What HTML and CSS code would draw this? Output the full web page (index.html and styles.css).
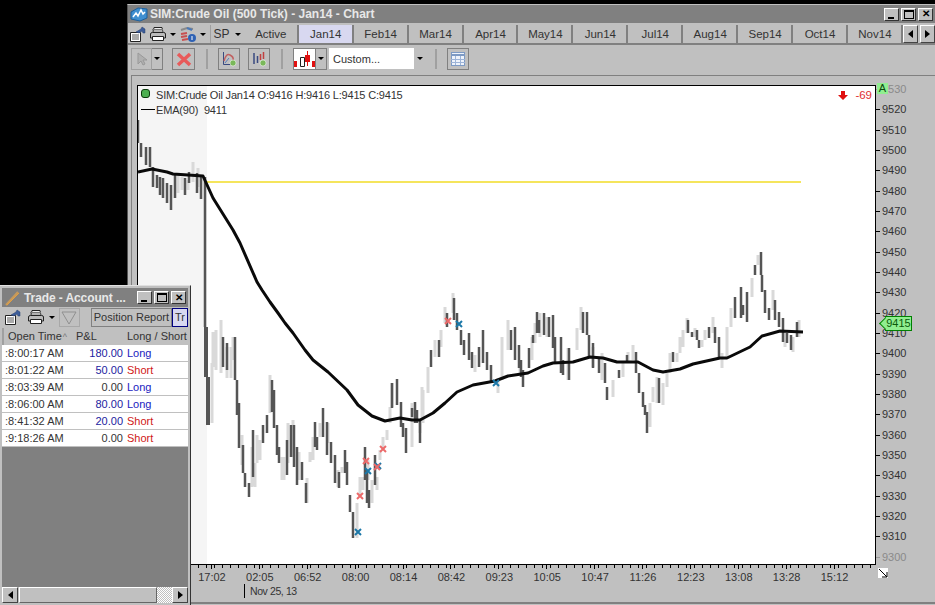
FILE: index.html
```html
<!DOCTYPE html>
<html lang="en">

<head>
    <meta charset="UTF-8">
    <title>SIM:Crude Oil (500 Tick) - Jan14 - Chart</title>
    <link rel="stylesheet" href="styles.css">
</head>

<body>
    <div class="desktop">
        <!-- chart window -->
        <div class="window chart-window">
            <div class="titlebar">
                <svg class="title-icon" width="18" height="16" viewBox="0 0 18 16">
                    <path d="M1 6l7-4 9 1v9l-7 3-9-2z" fill="#3f8fd0" stroke="#1d5f9c" />
                    <path d="M3 11l3-4 2 3 3-6 2 4 2-2" fill="none" stroke="#fff" stroke-width="1.5" />
                </svg>
                <span class="title-text">SIM:Crude Oil (500 Tick) - Jan14 - Chart</span>
                <div class="win-buttons">
                    <div class="win-btn"><span class="glyph-min"></span></div>
                    <div class="win-btn"><span class="glyph-max"></span></div>
                    <div class="win-btn glyph-close">✕</div>
                </div>
            </div>

            <div class="tabrow">
                <div class="tool-icons">
                    <div class="mini-btn">
                        <svg width="18" height="17" viewBox="0 0 18 17">
                            <path d="M1.500 6.500h10v9h-10z" fill="#fff" stroke="#222" />
                            <path d="M3 9h7M3 11h7M3 13h7" stroke="#555" />
                            <path d="M7 6l5-3 1-2 3 2v4h-2l-1-2-3 2z" fill="#3c5c9a" stroke="#27406e" stroke-width=".5" />
                        </svg>
                    </div>
                    <div class="mini-btn">
                        <svg width="18" height="17" viewBox="0 0 18 17">
                            <path d="M5 1.500l8 0 1 5H4z" fill="#eee" stroke="#222" />
                            <path d="M3 3.500h11M3 5h11" stroke="#777" />
                            <path d="M1.500 8q0-1.500 2-1.500h11q2 0 2 1.500v4h-15z" fill="#bbb" stroke="#222" />
                            <path d="M3.500 10.500h11v4h-11z" fill="#fff" stroke="#222" />
                        </svg>
                    </div>
                    <div class="drop-btn"><i class="arrow"></i></div>
                    <div class="mini-btn">
                        <svg width="18" height="17" viewBox="0 0 18 17">
                            <path d="M2 4l6-2 6 1" fill="none" stroke="#8a8a8a" stroke-width="2" />
                            <path d="M8 2l5 2" stroke="#4a78b8" stroke-width="2" />
                            <path d="M2 8l6-1M2 11l6-1M3 14l6-1" stroke="#c85050" stroke-width="2" />
                            <circle cx="13" cy="12" r="4" fill="#2f62b4" />
                            <path d="M13 10v4" stroke="#fff" />
                        </svg>
                    </div>
                    <div class="drop-btn"><i class="arrow"></i></div>
                    <div class="mini-btn sp-btn">SP</div>
                    <div class="drop-btn"><i class="arrow"></i></div>
                </div>
                <div class="tab">Active</div>
                <div class="tab tab-current">Jan14</div>
                <div class="tab">Feb14</div>
                <div class="tab">Mar14</div>
                <div class="tab">Apr14</div>
                <div class="tab">May14</div>
                <div class="tab">Jun14</div>
                <div class="tab">Jul14</div>
                <div class="tab">Aug14</div>
                <div class="tab">Sep14</div>
                <div class="tab">Oct14</div>
                <div class="tab">Nov14</div>
                <div class="tab-nav">
                    <div class="nav-btn"><i class="arrow-left"></i></div>
                    <div class="nav-btn"><i class="arrow-right"></i></div>
                </div>
            </div>

            <div class="toolbar">
                <div class="tool-btn tool-cursor">
                    <svg width="12" height="14" viewBox="0 0 12 14">
                        <path d="M2 1v11l3-3 2 4 2-1-2-4h4z" fill="#b0b0b0" stroke="#999" />
                    </svg>
                </div>
                <div class="tool-drop"><i class="arrow"></i></div>
                <div class="tool-btn tool-delete">
                    <svg width="16" height="16" viewBox="0 0 16 16">
                        <path d="M2 3l12 11M14 3L2 14" stroke="#e85a5a" stroke-width="3.500" />
                    </svg>
                </div>
                <div class="tool-sep"></div>
                <div class="tool-btn">
                    <svg width="16" height="16" viewBox="0 0 16 16">
                        <path d="M2.500 1v12.500H14" fill="none" stroke="#3a4a80" />
                        <path d="M3 10q2-8 6-6t3 5" fill="none" stroke="#c06060" stroke-width="1.500" />
                        <path d="M4 12l4-5" stroke="#5a7ab8" />
                        <circle cx="12" cy="12" r="3" fill="#7ab85a" stroke="#fff" stroke-width=".5" />
                    </svg>
                </div>
                <div class="tool-btn">
                    <svg width="16" height="16" viewBox="0 0 16 16">
                        <path d="M3 2v11M6.500 5v7" stroke="#3a4a80" stroke-width="1.500" />
                        <path d="M9.500 3v6M12.500 1v7" stroke="#c04040" stroke-width="1.500" />
                        <circle cx="12" cy="12" r="3" fill="#7ab85a" stroke="#fff" stroke-width=".5" />
                    </svg>
                </div>
                <div class="tool-sep"></div>
                <div class="tool-btn tool-candle">
                    <svg width="21" height="20" viewBox="0 0 21 20">
                        <path d="M0 12h3v6H0z" fill="#e01010" />
                        <path d="M6.500 8.500h4v9h-4z" fill="#fff" stroke="#222" />
                        <path d="M13.500 2v15" stroke="#e01010" />
                        <path d="M11 6h5v7h-5z" fill="#e01010" />
                        <path d="M18 12h3v6h-3z" fill="#e01010" />
                    </svg>
                </div>
                <div class="tool-drop tool-drop-candle"><i class="arrow"></i></div>
                <div class="combo">
                    <span class="combo-text">Custom...</span>
                    <div class="combo-btn"><i class="arrow"></i></div>
                </div>
                <div class="tool-sep"></div>
                <div class="tool-btn">
                    <svg width="16" height="16" viewBox="0 0 16 16">
                        <rect x="1.500" y="1.500" width="13" height="13" fill="#eef3fb" stroke="#7d9ac4" />
                        <path d="M1 4h14" stroke="#7d9ac4" stroke-width="2" />
                        <path d="M5.500 5v9M10.500 5v9M1 8.500h14M1 11.500h14" stroke="#9db4d8" />
                    </svg>
                </div>
            </div>

            <div class="chart-pane">
                <div class="plot-row">
                    <div class="plot">
                        <svg class="plot-svg" width="737" height="478" viewBox="138 86 737 478">
                            <rect x="138" y="86" width="69" height="478" fill="#f5f5f5" />
                            <path class="bars-light" d="M178 175V193M182 177V190M188 180V190M193 162V182M198 168V187M212 363V423M213 332V367M216 330V370M221 320V373M227 347V378M231 347V378M233 337V360M242 435V465M252 447V487M255 463V487M257 435V463M260 440V460M270 375V413M282 457V480M284 457V480M288 423V463M293 420V457M299 452V480M307 478V503M310 452V462M313 437V460M320 423V437M328 423V443M338 470V487M342 467V473M357 503V538M360 477V497M363 477V490M368 460V480M372 480V503M377 477V490M380 450V460M383 437V450M387 430V440M390 407V423M392 383V407M412 403V447M420 423V433M423 390V423M422 387V420M428 367V393M435 340V357M441 330V347M445 307V323M453 293V313M475 355V372M498 378V393M502 337V380M508 320V350M520 360V373M532 337V360M535 323V343M540 313V337M547 317V337M568 348V380M577 328V350M581 307V330M593 347V367M602 353V380M613 380V397M623 363V377M628 352V363M633 345V360M653 387V402M657 377V403M650 403V427M663 383V405M667 373V387M670 353V373M677 353V362M680 337V353M683 330V347M687 318V333M695 328V337M702 340V347M705 330V340M713 317V333M722 353V368M727 327V357M731 308V327M752 278V297M758 255V265M773 290V310M785 330V347M793 337V352M799 320V337" />
                            <path class="bars-dark" d="M138 120V143M141 143V157M146 147V165M150 147V167M153 167V187M157 175V188M160 177V195M163 178V198M167 183V203M171 185V210M175 175V198M185 178V195M189 172V183M197 173V193M201 175V199M205 177V327M223 337V367M227 343V370M235 337V380M237 380V415M239 403V448M243 445V473M245 473V487M249 483V497M253 430V477M263 425V443M267 415V433M272 380V412M274 390V428M277 425V455M279 447V463M287 440V475M291 425V457M294 425V467M297 447V485M302 462V480M306 483V503M315 422V447M317 437V450M323 408V437M327 422V455M331 442V463M335 455V483M339 472V488M345 450V473M347 462V485M350 495V512M353 512V538M365 447V480M367 470V503M369 490V508M375 455V485M392 383V408M397 379V405M401 402V427M403 423V437M406 428V453M412 408V417M415 402V423M417 410V423M420 420V443M431 350V367M439 340V357M447 313V327M454 298V320M457 313V330M461 330V345M464 340V355M469 333V360M472 352V368M479 347V367M483 330V363M487 352V370M491 365V383M511 330V350M515 327V360M519 345V368M521 360V377M523 370V387M529 348V368M533 335V343M537 312V333M539 320V333M544 313V335M549 317V337M553 315V348M555 337V362M561 337V373M563 360V375M569 348V380M583 312V333M587 312V335M589 335V357M593 343V368M599 358V373M605 363V383M607 387V400M619 370V378M627 355V362M636 352V373M639 373V393M643 392V407M645 405V415M647 412V433M659 378V403M673 352V362M688 320V333M692 332V337M697 330V340M699 340V348M709 327V338M715 327V343M719 337V357M735 297V318M741 287V318M743 305V315M747 292V322M755 265V275M761 252V275M762 275V292M765 290V313M769 308V320M775 300V320M779 312V327M783 318V342M787 333V343M791 335V350M797 322V337" />
                            <path class="bars-thick" d="M206 327V377M208 377V425" />
                            <path class="target-line" d="M205 182H801" />
                            <path class="ema-line" d="M138 172L152 169L167 172L173 174L203 176L213 198L233 230L240 243L257 282L262 290L270 302L278 313L285 323L293 333L305 350L313 360L328 372L347 390L358 405L372 416L385 421L400 418L412 420L420 420L433 413L445 403L457 392L473 385L495 381L508 376L528 373L543 366L553 363L573 362L590 357L603 358L617 362L638 362L653 370L663 372L680 369L693 364L720 358L727 358L750 347L762 336L780 331L803 332" />
                            <path class="mark-sell" d="M357 493l6 6M363 493l-6 6M363 458l6 6M369 458l-6 6M380 446l6 6M386 446l-6 6M445 318l6 6M451 318l-6 6" />
                            <path class="mark-buy" d="M355 529l6 6M361 529l-6 6M365 468l6 6M371 468l-6 6M375 463l6 6M381 463l-6 6M456 321l6 6M462 321l-6 6M493 380l6 6M499 380l-6 6" />
                            <path class="mark-sell" d="M374 464l6 6M380 464l-6 6" />
                        </svg>

                        <div class="legend">
                            <div class="legend-row"><i class="status-dot"></i>SIM:Crude Oil Jan14 O:9416 H:9416 L:9415 C:9415</div>
                            <div class="legend-row"><i class="ema-key"></i>EMA(90)&nbsp; 9411</div>
                        </div>
                        <div class="pnl">
                            <svg width="10" height="9" viewBox="0 0 10 9">
                                <path d="M3 0h4v4h3L5 9 0 4h3z" fill="#e01010" />
                            </svg>
                            <span>-69</span>
                        </div>
                    </div>

                    <div class="price-axis">
                        <div class="price price-faint">9530</div>
                        <div class="price">9520</div>
                        <div class="price">9510</div>
                        <div class="price">9500</div>
                        <div class="price">9490</div>
                        <div class="price">9480</div>
                        <div class="price">9470</div>
                        <div class="price">9460</div>
                        <div class="price">9450</div>
                        <div class="price">9440</div>
                        <div class="price">9430</div>
                        <div class="price">9420</div>
                        <div class="price">9410</div>
                        <div class="price">9400</div>
                        <div class="price">9390</div>
                        <div class="price">9380</div>
                        <div class="price">9370</div>
                        <div class="price">9360</div>
                        <div class="price">9350</div>
                        <div class="price">9340</div>
                        <div class="price">9330</div>
                        <div class="price">9320</div>
                        <div class="price">9310</div>
                        <div class="price price-faint">9300</div>
                        <div class="auto-flag">A</div>
                        <div class="last-price">9415</div>
                        <div class="resize-box">
                            <svg width="9" height="9" viewBox="0 0 9 9">
                                <path d="M0 0l8 8M8 3v5H3" fill="none" stroke="#000" />
                            </svg>
                        </div>
                    </div>
                </div>

                <div class="time-axis">
                    <div class="time-ticks"></div>
                    <div class="time-labels">
                        <span class="time">17:02</span>
                        <span class="time">02:05</span>
                        <span class="time">06:52</span>
                        <span class="time">08:00</span>
                        <span class="time">08:14</span>
                        <span class="time">08:42</span>
                        <span class="time">09:23</span>
                        <span class="time">10:05</span>
                        <span class="time">10:47</span>
                        <span class="time">11:26</span>
                        <span class="time">12:23</span>
                        <span class="time">13:08</span>
                        <span class="time">13:28</span>
                        <span class="time">15:12</span>
                    </div>
                    <div class="date-label">Nov 25, 13</div>
                </div>
            </div>
        </div>

        <!-- trade window -->
        <div class="window trade-window">
            <div class="titlebar trade-title">
                <svg class="title-icon" width="18" height="16" viewBox="0 0 18 16">
                    <path d="M2 15L14 2" stroke="#c89a5a" stroke-width="2" />
                    <path d="M3 15L15 3" stroke="#e6a040" />
                </svg>
                <span class="title-text">Trade - Account ...</span>
                <div class="win-buttons">
                    <div class="win-btn"><span class="glyph-min"></span></div>
                    <div class="win-btn"><span class="glyph-max"></span></div>
                    <div class="win-btn glyph-close">✕</div>
                </div>
            </div>
            <div class="trade-toolbar">
                <div class="mini-btn">
                    <svg width="18" height="17" viewBox="0 0 18 17">
                        <path d="M1.500 6.500h10v9h-10z" fill="#fff" stroke="#222" />
                        <path d="M3 9h7M3 11h7M3 13h7" stroke="#555" />
                        <path d="M7 6l5-3 1-2 3 2v4h-2l-1-2-3 2z" fill="#3c5c9a" stroke="#27406e" stroke-width=".5" />
                    </svg>
                </div>
                <div class="mini-btn">
                    <svg width="18" height="17" viewBox="0 0 18 17">
                        <path d="M5 1.500l8 0 1 5H4z" fill="#eee" stroke="#222" />
                        <path d="M3 3.500h11M3 5h11" stroke="#777" />
                        <path d="M1.500 8q0-1.500 2-1.500h11q2 0 2 1.500v4h-15z" fill="#bbb" stroke="#222" />
                        <path d="M3.500 10.500h11v4h-11z" fill="#fff" stroke="#222" />
                    </svg>
                </div>
                <div class="drop-btn"><i class="arrow"></i></div>
                <div class="filter-btn">
                    <svg width="16" height="14" viewBox="0 0 16 14">
                        <path d="M1 1h14L8 13z" fill="none" stroke="#909090" />
                    </svg>
                </div>
                <div class="report-tab">Position Report</div>
                <div class="report-tab report-tab-on">Tr</div>
            </div>
            <div class="trade-table">
                <div class="trade-head">
                    <span class="col-time">Open Time<i class="sort-mark">^</i></span>
                    <span class="col-pnl">P&amp;L</span>
                    <span class="col-side">Long / Short</span>
                </div>
                <div class="trade-row">
                    <span class="col-time">8:00:17 AM</span>
                    <span class="col-pnl pnl-value">180.00</span>
                    <span class="col-side side-long">Long</span>
                </div>
                <div class="trade-row">
                    <span class="col-time">8:01:22 AM</span>
                    <span class="col-pnl pnl-value">50.00</span>
                    <span class="col-side side-short">Short</span>
                </div>
                <div class="trade-row">
                    <span class="col-time">8:03:39 AM</span>
                    <span class="col-pnl pnl-zero">0.00</span>
                    <span class="col-side side-long">Long</span>
                </div>
                <div class="trade-row">
                    <span class="col-time">8:06:00 AM</span>
                    <span class="col-pnl pnl-value">80.00</span>
                    <span class="col-side side-long">Long</span>
                </div>
                <div class="trade-row">
                    <span class="col-time">8:41:32 AM</span>
                    <span class="col-pnl pnl-value">20.00</span>
                    <span class="col-side side-short">Short</span>
                </div>
                <div class="trade-row">
                    <span class="col-time">9:18:26 AM</span>
                    <span class="col-pnl pnl-zero">0.00</span>
                    <span class="col-side side-short">Short</span>
                </div>
            </div>
            <div class="trade-empty"></div>
            <div class="scrollbar">
                <div class="nav-btn scroll-btn"><i class="arrow-left"></i></div>
                <div class="scroll-thumb"></div>
                <div class="scroll-track"></div>
                <div class="nav-btn scroll-btn"><i class="arrow-right"></i></div>
            </div>
        </div>
    </div>
</body>

</html>
```

FILE: styles.css
```css
body {
    margin: 0;
    background-color: #000;
    font-family: "Liberation Sans", Arial, sans-serif;
    font-size: 11px;
    color: #333;
}

.desktop {
    position: relative;
    width: 935px;
    height: 605px;
    overflow: hidden;
}

.window {
    position: absolute;
    box-sizing: border-box;
    display: flex;
    flex-direction: column;
    background-color: #c0c0c0;
}

.chart-window {
    left: 127px;
    top: 4px;
    width: 808px;
    height: 601px;
    border-top: 1px solid #c0c0c0;
    border-left: 1px solid #555;
}

.trade-window {
    left: 0;
    top: 285px;
    width: 191px;
    height: 320px;
    padding: 2px;
    border-right: 1px solid #333;
    border-top: 1px solid #e0e0e0;
}

/* Title bars */
.titlebar {
    display: flex;
    align-items: center;
    height: 18px;
    background-color: #808080;
    color: #e8e8e8;
    flex-shrink: 0;
}

.title-icon {
    margin-left: 2px;
    margin-right: 2px;
}

.title-text {
    font-size: 12px;
    font-weight: bold;
}

.win-buttons {
    display: flex;
    gap: 2px;
    margin-left: auto;
    margin-right: 2px;
}

.win-btn {
    box-sizing: border-box;
    width: 15px;
    height: 13px;
    display: flex;
    align-items: center;
    justify-content: center;
    background-color: #c0c0c0;
    border: 1px solid;
    border-color: #fff #333 #333 #fff;
}

.glyph-min {
    width: 6px;
    height: 2px;
    margin-top: 7px;
    margin-right: 1px;
    background-color: #000;
}

.glyph-max {
    box-sizing: border-box;
    width: 10px;
    height: 9px;
    border: 1px solid #000;
    border-top-width: 2px;
}

.glyph-close {
    font-size: 10px;
    font-weight: bold;
    line-height: 1;
    color: #000;
}

/* Contract tabs */
.tabrow {
    display: flex;
    height: 20px;
    flex-shrink: 0;
    box-sizing: border-box;
    border-bottom: 2px solid #808080;
    margin-top: 2px;
}

.tool-icons {
    display: flex;
    gap: 2px;
    width: 116px;
    padding-left: 1px;
    box-sizing: border-box;
}

.mini-btn {
    display: flex;
    align-items: center;
    justify-content: center;
    width: 18px;
    height: 18px;
    background-color: #c0c0c0;
}

.sp-btn {
    width: 21px;
    margin-left: 1px;
    font-size: 12px;
    border-left: 1px solid #a0a0a0;
}

.drop-btn {
    display: flex;
    align-items: center;
    justify-content: center;
    width: 8px;
    height: 18px;
}

.arrow {
    width: 0;
    height: 0;
    border-left: 3px solid transparent;
    border-right: 3px solid transparent;
    border-top: 3px solid #000;
}

.arrow-left,
.arrow-right {
    width: 0;
    height: 0;
    border-top: 4px solid transparent;
    border-bottom: 4px solid transparent;
}

.arrow-left {
    border-right: 5px solid #000;
}

.arrow-right {
    border-left: 5px solid #000;
}

.tab {
    box-sizing: border-box;
    width: 55px;
    height: 18px;
    padding-left: 1px;
    display: flex;
    align-items: center;
    justify-content: center;
    font-size: 11.5px;
    color: #333;
    border-right: 2px solid #808080;
}

.tab-current {
    background-color: #d8d8f0;
}

.tab-nav {
    display: flex;
    gap: 2px;
}

.nav-btn {
    box-sizing: border-box;
    width: 15px;
    height: 18px;
    display: flex;
    align-items: center;
    justify-content: center;
    background-color: #c0c0c0;
    border: 1px solid;
    border-color: #fff #444 #444 #fff;
}

/* Drawing toolbar */
.toolbar {
    display: flex;
    align-items: center;
    height: 27px;
    padding-bottom: 2px;
    flex-shrink: 0;
    padding-left: 3px;
}

.tool-btn {
    box-sizing: border-box;
    width: 22px;
    height: 22px;
    display: flex;
    align-items: center;
    justify-content: center;
    border: 1px solid #808080;
    margin-right: 8px;
}

.tool-cursor {
    margin-right: 0;
    width: 21px;
    border-color: #a0a0a0;
}

.tool-drop {
    box-sizing: border-box;
    width: 11px;
    height: 22px;
    display: flex;
    align-items: center;
    justify-content: center;
    border: 1px solid #808080;
    border-left: none;
    margin-right: 9px;
}

.tool-delete {
    width: 23px;
}

.tool-sep {
    width: 2px;
    height: 20px;
    background-color: #a0a0a0;
    margin: 0 10px 0 3px;
}

.tool-candle {
    width: 23px;
    margin-right: 0;
    background-color: #fff;
    border-color: #808080;
}

.tool-drop-candle {
    margin-right: 2px;
}

.combo {
    display: flex;
    align-items: center;
    width: 96px;
    height: 21px;
    background-color: #fff;
    margin-right: 7px;
}

.combo-text {
    flex: 1;
    padding-left: 4px;
    font-size: 11px;
    color: #333;
}

.combo-btn {
    width: 11px;
    height: 21px;
    display: flex;
    align-items: center;
    justify-content: center;
    background-color: #c0c0c0;
}

/* Chart pane */
.chart-pane {
    flex: 1;
    display: flex;
    flex-direction: column;
    margin: 1px 0 1px 3px;
    padding: 9px 0 0 5px;
    border-top: 1px solid #808080;
    border-bottom: 2px solid #808080;
    border-left: 1px solid #808080;
    min-height: 0;
}

.plot-row {
    display: flex;
    height: 480px;
}

.plot {
    position: relative;
    box-sizing: border-box;
    width: 739px;
    height: 480px;
    background-color: #fff;
    border: 1px solid #000;
    flex-shrink: 0;
}

.plot-svg {
    display: block;
}

.bars-light {
    fill: none;
    stroke: #d9d9d9;
    stroke-width: 3;
}

.bars-dark {
    fill: none;
    stroke: #555;
    stroke-width: 2.500;
}

.bars-thick {
    fill: none;
    stroke: #555;
    stroke-width: 4;
}

.target-line {
    fill: none;
    stroke: #f5e55c;
    stroke-width: 2;
}

.ema-line {
    fill: none;
    stroke: #0a0a0a;
    stroke-width: 3;
    stroke-linejoin: round;
}

.mark-sell {
    fill: none;
    stroke: #ec6a6a;
    stroke-width: 2;
}

.mark-buy {
    fill: none;
    stroke: #1c78a8;
    stroke-width: 2;
}

/* Overlays on the plot */
.legend {
    position: absolute;
    left: 3px;
    top: 1px;
    font-size: 11px;
    letter-spacing: -0.18px;
    color: #333;
}

.legend-row {
    display: flex;
    align-items: center;
    height: 15px;
}

.status-dot {
    box-sizing: border-box;
    width: 9px;
    height: 9px;
    margin: -3px 6px 0 0;
    background-color: #4caf50;
    border: 1px solid #0c3a0c;
    border-radius: 3px;
}

.ema-key {
    width: 14px;
    height: 1px;
    margin-right: 1px;
    background-color: #000;
}

.pnl {
    position: absolute;
    right: 3px;
    top: 3px;
    display: flex;
    align-items: center;
    gap: 7px;
    color: #e03030;
    font-size: 11.5px;
}

/* Price axis */
.price-axis {
    position: relative;
    flex: 1;
    margin-top: -6px;
    display: flex;
    flex-direction: column;
}

.price {
    position: relative;
    flex: 0 0 20.33px;
    line-height: 20px;
    padding-left: 6px;
    font-size: 11px;
    color: #333;
}

.price::before {
    content: "";
    position: absolute;
    left: 0;
    top: 10px;
    width: 4px;
    height: 1px;
    background-color: #000;
}

.price-faint {
    color: #8a8a8a;
}

.price-faint::before {
    background-color: #999;
}

.auto-flag {
    position: absolute;
    left: 1px;
    top: 4px;
    width: 11px;
    height: 11px;
    line-height: 11px;
    text-align: center;
    background-color: #90ee90;
    color: #0a4a0a;
}

.last-price {
    position: absolute;
    z-index: 1;
    left: 9px;
    top: 237px;
    box-sizing: border-box;
    width: 27px;
    height: 15px;
    line-height: 13px;
    text-align: center;
    background-color: #90ee90;
    border: 1px solid #008000;
    color: #0a5a0a;
    font-size: 11px;
}

.last-price::before {
    content: "";
    position: absolute;
    z-index: -1;
    left: -5px;
    top: 2px;
    box-sizing: border-box;
    width: 9px;
    height: 9px;
    background-color: #90ee90;
    border-left: 1px solid #008000;
    border-bottom: 1px solid #008000;
    transform: rotate(45deg);
}

.resize-box {
    position: absolute;
    left: 2px;
    top: 489px;
    width: 10px;
    height: 10px;
    display: flex;
    align-items: center;
    justify-content: center;
    background-color: #fff;
}

/* Time axis */
.time-axis {
    width: 740px;
    position: relative;
}

.time-ticks {
    height: 3px;
    margin-left: 53px;
    background-image: repeating-linear-gradient(90deg, #000 0, #000 1px, transparent 1px, transparent 8px);
}

.time-labels {
    display: flex;
    margin-left: 51px;
    margin-top: 2px;
}

.time {
    position: relative;
    flex: 0 0 47.9px;
    text-align: center;
    font-size: 11px;
    color: #333;
    line-height: 14px;
}

.time::before {
    content: "";
    position: absolute;
    left: 23px;
    top: -6px;
    width: 1px;
    height: 5px;
    background-color: #000;
}

.date-label {
    margin-left: 107px;
    margin-top: 0;
    padding-left: 5px;
    height: 14px;
    line-height: 14px;
    border-left: 1px solid #000;
    font-size: 10.5px;
    letter-spacing: -0.4px;
    color: #333;
}

/* Trade window contents */
.trade-title {
    height: 19px;
}

.trade-title .title-text {
    letter-spacing: -0.1px;
}

.trade-toolbar {
    display: flex;
    align-items: center;
    height: 21px;
    flex-shrink: 0;
    overflow: hidden;
    padding-left: 1px;
}

.trade-toolbar .mini-btn {
    width: 20px;
    margin-right: 3px;
}

.trade-toolbar .drop-btn {
    margin-left: -1px;
}

.filter-btn {
    box-sizing: border-box;
    width: 21px;
    height: 19px;
    margin: 0 11px 0 3px;
    display: flex;
    align-items: center;
    justify-content: center;
    border: 1px solid #a8a8a8;
}

.report-tab {
    height: 17px;
    line-height: 17px;
    padding: 0 2px;
    border: 1px solid #808080;
    font-size: 11px;
    white-space: nowrap;
    flex-shrink: 0;
}

.report-tab-on {
    background-color: #d8d8f0;
    border: 1px solid #000080;
}

.trade-table {
    flex-shrink: 0;
    background-color: #fff;
}

.trade-head,
.trade-row {
    display: flex;
    height: 17px;
    line-height: 16px;
    font-size: 11px;
    box-sizing: border-box;
}

.trade-head {
    background-color: #c0c0c0;
    border-left: 2px solid #a0a0a0;
}

.trade-row {
    border-bottom: 1px solid #c0c0c0;
}

.col-time {
    width: 69px;
    padding-left: 4px;
    box-sizing: border-box;
    white-space: nowrap;
}

.trade-row .col-time {
    width: 71px;
    padding-left: 3px;
}

.trade-row .col-time::before {
    content: ":";
    display: inline-block;
    width: 3px;
    color: #555;
}

.col-pnl {
    width: 54px;
    box-sizing: border-box;
}

.trade-head .col-pnl {
    padding-left: 3px;
}

.col-side {
    white-space: nowrap;
}

.trade-row .col-pnl {
    width: 50px;
    text-align: right;
}

.trade-row .col-side {
    padding-left: 4px;
}

.sort-mark {
    font-style: normal;
    font-size: 9px;
    color: #777;
    margin-left: 1px;
}

.pnl-value {
    color: #2222a0;
}

.pnl-zero {
    color: #333;
}

.side-long {
    color: #1a1ac0;
}

.side-short {
    color: #d01818;
}

.trade-empty {
    flex: 1;
    background-color: #808080;
}

.scrollbar {
    display: flex;
    height: 16px;
    flex-shrink: 0;
    background-color: #c0c0c0;
}

.scroll-btn {
    width: 16px;
    height: 16px;
}

.scroll-thumb {
    box-sizing: border-box;
    width: 138px;
    margin-left: 1px;
    border: 1px solid;
    border-color: #fff #666 #666 #fff;
}

.scroll-track {
    flex: 1;
    background-image: repeating-conic-gradient(#fff 0 25%, #c0c0c0 0 50%);
    background-size: 2px 2px;
}
```
